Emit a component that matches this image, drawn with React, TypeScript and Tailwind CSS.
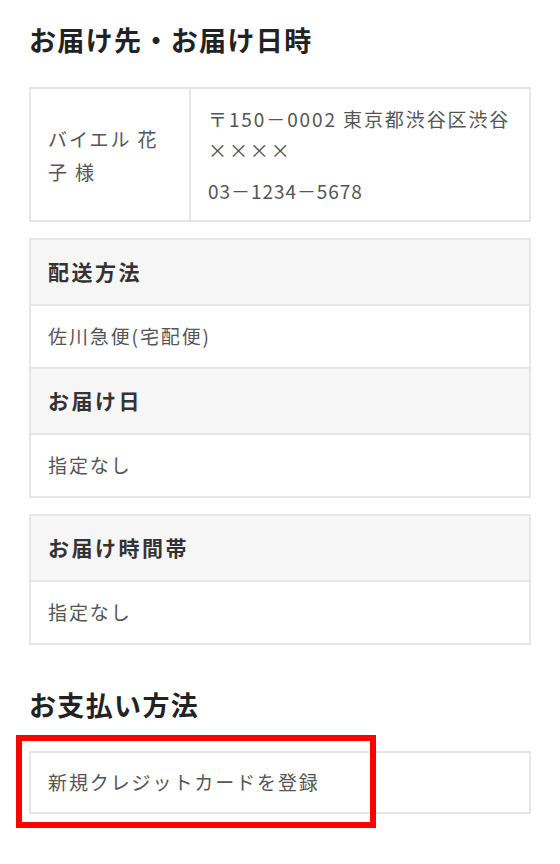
const font = { fontFamily: '"Noto Sans CJK JP", "Noto Sans", sans-serif' };

function Row({ head, body }: { head: string; body: string }) {
  return (
    <>
      <div className="flex h-[66px] items-center border-b-2 border-[#e6e6e6] bg-[#f6f6f6] px-[17px] text-[21px] font-bold tracking-[0.12em] text-[#333]">
        {head}
      </div>
      <div className="flex h-[63px] items-center border-b-2 border-[#e6e6e6] px-[17px] text-[19px] tracking-[0.1em] text-[#555]">
        {body}
      </div>
    </>
  );
}

export default function App() {
  return (
    <div className="min-h-[864px] bg-white px-[29px] pt-[22px] pb-10" style={font}>
      <h2 className="text-[27px] font-bold leading-[36px] tracking-[0.05em] text-[#222]">
        お届け先・お届け日時
      </h2>

      <div className="mt-[29px] flex border-2 border-[#e6e6e6]">
        <div className="flex w-[160px] shrink-0 items-center border-r-2 border-[#e6e6e6] px-[17px] text-[19px] leading-[33px] tracking-[0.1em] text-[#555]">
          バイエル 花 子 様
        </div>
        <div className="flex-1 py-[14px] pl-[17px] text-[19px] leading-[31px] tracking-[0.1em] text-[#555]">
          <p>
            <span className="block whitespace-nowrap">〒150－0002 東京都渋谷区渋谷</span>
            <span className="block">××××</span>
          </p>
          <p className="mt-[10px] tracking-[0.05em]">03－1234－5678</p>
        </div>
      </div>

      <div className="mt-[16px] border-x-2 border-t-2 border-[#e6e6e6]">
        <Row head="配送方法" body="佐川急便(宅配便)" />
        <Row head="お届け日" body="指定なし" />
      </div>

      <div className="mt-[16px] border-x-2 border-t-2 border-[#e6e6e6]">
        <Row head="お届け時間帯" body="指定なし" />
      </div>

      <h2 className="mt-[42px] text-[27px] font-bold leading-[36px] tracking-[0.05em] text-[#222]">
        お支払い方法
      </h2>

      <div className="relative mt-[28px]">
        <div className="flex h-[63px] items-center border-2 border-[#e6e6e6] px-[17px] text-[19px] tracking-[0.1em] text-[#555]">
          新規クレジットカードを登録
        </div>
        <div className="pointer-events-none absolute -top-[16px] -left-[13px] h-[93px] w-[360px] border-[6px] border-[#ff0000]" />
      </div>
    </div>
  );
}
